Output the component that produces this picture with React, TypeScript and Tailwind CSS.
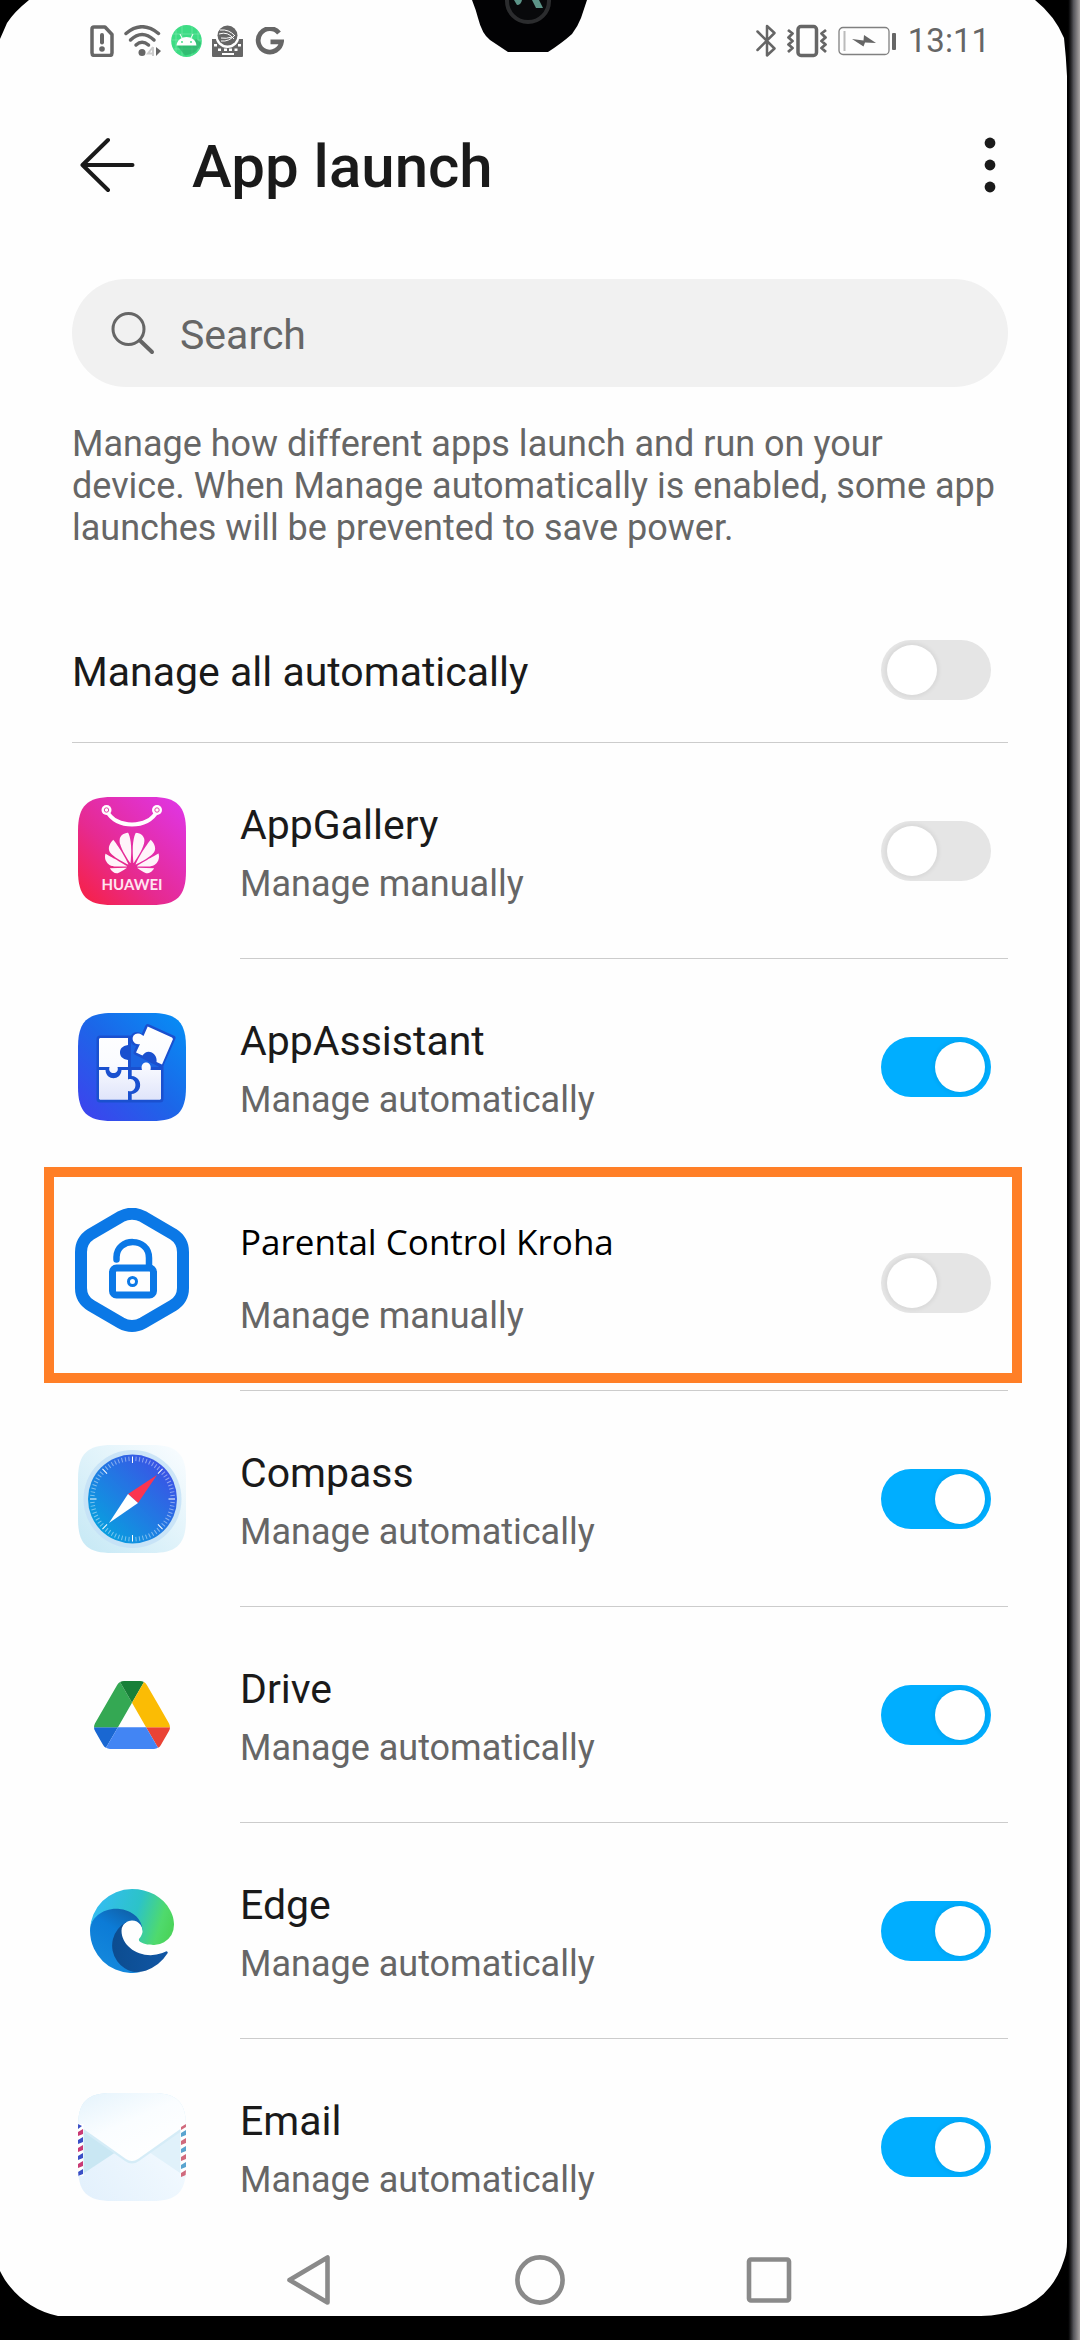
import React, { useState } from "react"
import { SiHuawei } from "react-icons/si"

type AppItem = {
    id: string
    name: string
    auto: boolean
    icon: React.ReactNode
    highlighted?: boolean
}

const SQUIRCLE = "M0 34C0 9 9 0 34 0H74C99 0 108 9 108 34V74C108 99 99 108 74 108H34C9 108 0 99 0 74Z"

const AppGalleryIcon = () => (
    <svg viewBox="0 0 108 108" className="size-[108px]" aria-hidden="true">
        <defs>
            <linearGradient id="gallery" x1="0" y1="1" x2="1" y2="0">
                <stop offset="0" stopColor="#f8203f" />
                <stop offset="0.4" stopColor="#e62a90" />
                <stop offset="1" stopColor="#df36ea" />
            </linearGradient>
        </defs>
        <path d={SQUIRCLE} fill="url(#gallery)" />
        <path d="M29 14C37 32 71 32 79 14" fill="none" stroke="#fff" strokeWidth="4" strokeLinecap="round" />
        <circle cx="28.5" cy="13" r="5" fill="#fff" />
        <circle cx="79" cy="13" r="5" fill="#fff" />
        <circle cx="28.5" cy="13" r="2.2" fill="none" stroke="#e04aa8" strokeWidth="1" />
        <circle cx="79" cy="13" r="2.2" fill="none" stroke="#e04aa8" strokeWidth="1" />
        <SiHuawei x="27" y="29" size={54} color="#fff4fa" />
        <text x="54" y="93" textAnchor="middle" fontSize="15" fontWeight="700" fill="#ffe3f0" className="font-[Lato,sans-serif]">HUAWEI</text>
    </svg>
)

const AssistantIcon = () => (
    <svg viewBox="0 0 108 108" className="size-[108px]" aria-hidden="true">
        <defs>
            <linearGradient id="assistant" x1="0" y1="1" x2="1" y2="0">
                <stop offset="0" stopColor="#4040ee" />
                <stop offset="0.5" stopColor="#1c66e8" />
                <stop offset="1" stopColor="#0590f6" />
            </linearGradient>
            <linearGradient id="piece" x1="0" y1="15" x2="0" y2="87" gradientUnits="userSpaceOnUse">
                <stop offset="0" stopColor="#ffffff" />
                <stop offset="0.5" stopColor="#fafbff" />
                <stop offset="1" stopColor="#dfe4fa" />
            </linearGradient>
        </defs>
        <path d={SQUIRCLE} fill="url(#assistant)" />
        <rect x="21" y="25" width="62" height="62" rx="1" fill="#1a50cf" stroke="#1a50cf" strokeWidth="5" strokeLinejoin="round" />
        <path d="M53 22H86V54H53Z" fill="#1b64e2" />
        <path d="M69.7 13.5L95 25L83 52L58 39.5Z" fill="#1a50cf" stroke="#1a50cf" strokeWidth="5" strokeLinejoin="round" />
        <circle cx="59" cy="26" r="7" fill="#1a50cf" />
        <g fill="url(#piece)">
            <path d="M22 25H50V32C44 33 42 36 42 39.5S44 46 50 47V54H39.5C42 62 29 62 31.5 54H21V26Z" />
            <path d="M21 57H27.5C28 68 43 68 43.5 57H50V66.5C60 63 60 81 50 78V86.7H22L21 85.7Z" />
            <path d="M53.7 57H64C61 47 75 47 72.5 57H83V85.7L82 86.7H53.7V81C65 80 65 64 53.7 63Z" />
            <path d="M69.7 13.5L94 24.5L95 26L84 51.5L78.5 49C80 40 69 34.5 64.5 42.5L58 39.5L62 31C54 33 51.5 21 60 20.5C63 20.5 64 22 65.5 23Z" />
        </g>
    </svg>
)

// the shield sits in the top part of a taller box
const KrohaIcon = () => (
    <svg viewBox="0 0 114 150" className="h-[150px] w-[114px]" fill="none" stroke="#0b78e6" aria-hidden="true">
        <path d="M46 8.5Q57 3 68 8.5L98 26Q108 32.5 108 44V80Q108 91.5 98 97.5L68 115Q57 121 46 115L16 97.5Q6 91.5 6 80V44Q6 32.5 16 26Z" strokeWidth="12" />
        <rect x="37.5" y="60" width="41" height="27" rx="4" strokeWidth="7" />
        <path d="M41.5 51.5V49C42 29 74 29 74 50V58" strokeWidth="6.5" strokeLinecap="round" />
        <circle cx="57.5" cy="73.5" r="4" strokeWidth="3" />
    </svg>
)

const CompassIcon = () => (
    <svg viewBox="0 0 108 108" className="size-[108px]" aria-hidden="true">
        <defs>
            <linearGradient id="compassBg" x1="0" y1="1" x2="1" y2="0">
                <stop offset="0" stopColor="#c5e8f5" />
                <stop offset="1" stopColor="#fafdff" />
            </linearGradient>
            <linearGradient id="dial" x1="0" y1="1" x2="1" y2="0">
                <stop offset="0.1" stopColor="#06a3df" />
                <stop offset="0.9" stopColor="#3d4fe6" />
            </linearGradient>
        </defs>
        <path d={SQUIRCLE} fill="url(#compassBg)" />
        <circle cx="54.5" cy="54" r="49" fill="#c3e0f6" fillOpacity="0.8" />
        <circle cx="54.5" cy="54" r="44.5" fill="url(#dial)" />
        {Array.from({ length: 72 }, (_, i) => (
            <line
                key={i}
                x1="54.5"
                x2="54.5"
                y1="11.5"
                y2={i % 9 === 0 ? 18 : 16}
                stroke="#fff"
                strokeWidth="1"
                strokeOpacity={i % 9 === 0 ? 1 : 0.45}
                transform={`rotate(${i * 5} 54.5 54)`}
            />
        ))}
        <path d="M79 30L50 49L60 58Z" fill="#fb3550" />
        <path d="M31 78L50 49L60 58Z" fill="#fff" />
    </svg>
)

const DriveIcon = () => (
    <svg viewBox="0 0 87.3 78" className="w-[76px]" aria-hidden="true">
        <path fill="#1967d2" d="m6.6 66.85 3.85 6.65c.8 1.4 1.95 2.5 3.3 3.3l13.75-23.8h-27.5c0 1.55.4 3.1 1.2 4.5z" />
        <path fill="#34a853" d="m43.65 25-13.75-23.8c-1.35.8-2.5 1.9-3.3 3.3l-25.4 44a9.06 9.06 0 0 0 -1.2 4.5h27.5z" />
        <path fill="#ea4335" d="m73.55 76.8c1.35-.8 2.5-1.9 3.3-3.3l1.6-2.75 7.65-13.25c.8-1.4 1.2-2.95 1.2-4.5h-27.5z" />
        <path fill="#188038" d="m43.65 25 13.75-23.8c-1.35-.8-2.9-1.2-4.5-1.2h-18.5c-1.6 0-3.15.45-4.5 1.2z" />
        <path fill="#4285f4" d="m59.8 53h-32.3l-13.75 23.8c1.35.8 2.9 1.2 4.5 1.2h50.8c1.6 0 3.15-.45 4.5-1.2z" />
        <path fill="#fbbc04" d="m73.4 26.5-12.7-22c-.8-1.4-1.95-2.5-3.3-3.3l-13.75 23.8 16.15 28h27.45c0-1.55-.4-3.1-1.2-4.5z" />
    </svg>
)

const EdgeIcon = () => (
    <svg viewBox="0 0 256 256" className="size-[84px]" aria-hidden="true">
        <defs>
            <linearGradient id="edgeDark" x1="63" y1="177" x2="241" y2="177" gradientUnits="userSpaceOnUse">
                <stop offset="0" stopColor="#0c4c8f" />
                <stop offset="1" stopColor="#1156a4" />
            </linearGradient>
            <linearGradient id="edgeBlue" x1="140" y1="80" x2="50" y2="230" gradientUnits="userSpaceOnUse">
                <stop offset="0" stopColor="#1062ab" />
                <stop offset="0.4" stopColor="#0c7bd6" />
                <stop offset="1" stopColor="#1387dc" />
            </linearGradient>
            <linearGradient id="edgeGreen" x1="30" y1="60" x2="250" y2="130" gradientUnits="userSpaceOnUse">
                <stop offset="0" stopColor="#33bdee" />
                <stop offset="0.5" stopColor="#2cc3c8" />
                <stop offset="0.85" stopColor="#4fda6d" />
                <stop offset="1" stopColor="#4bd45c" />
            </linearGradient>
        </defs>
        <g transform="translate(-4.63 -4.92)">
            <path fill="url(#edgeDark)" d="M235.68 195.46a93.73 93.73 0 0 1-10.54 4.71 101.87 101.87 0 0 1-35.9 6.46c-47.32 0-88.54-32.55-88.54-74.32A31.48 31.48 0 0 1 117.13 105c-42.8 1.8-53.8 46.4-53.8 72.53 0 73.88 68.09 81.37 82.76 81.37 7.91 0 19.84-2.3 27-4.56l1.31-.44a128.34 128.34 0 0 0 66.6-52.8 4 4 0 0 0-5.32-5.64Z" />
            <path fill="url(#edgeBlue)" d="M110.34 246.34A79.2 79.2 0 0 1 87.6 225a80.72 80.72 0 0 1 29.53-120c3.12-1.47 8.45-4.13 15.54-4a32.35 32.35 0 0 1 25.69 13 31.88 31.88 0 0 1 6.36 18.66c0-.21 24.46-79.6-80-79.6-43.9 0-80 41.66-80 78.21a130.15 130.15 0 0 0 12.11 56 128 128 0 0 0 156.38 67.11 75.55 75.55 0 0 1-62.78-8Z" />
            <path fill="url(#edgeGreen)" d="M156.94 153.78c-.81 1.05-3.3 2.5-3.3 5.66 0 2.61 1.7 5.12 4.72 7.23 14.38 10 41.49 8.68 41.56 8.68a59.56 59.56 0 0 0 30.27-8.35A61.38 61.38 0 0 0 260.63 114c.26-22.41-8-37.31-11.34-43.91C228.09 28.76 182.35 5 132.63 5a128 128 0 0 0-128 126.2c.48-36.54 36.8-66.05 80-66.05 3.5 0 23.46.34 42 10.07 16.34 8.58 24.9 18.94 30.85 29.21 6.18 10.67 7.28 24.15 7.28 29.52s-2.74 13.33-7.82 19.83Z" />
        </g>
    </svg>
)

const EmailIcon = () => (
    <svg viewBox="0 0 108 108" className="size-[108px]" aria-hidden="true">
        <defs>
            <linearGradient id="mailBody" x1="0" y1="1" x2="1" y2="0.3">
                <stop offset="0" stopColor="#e2f0fc" />
                <stop offset="1" stopColor="#f5fbff" />
            </linearGradient>
            <linearGradient id="mailFlap" x1="0" y1="0" x2="0.7" y2="1">
                <stop offset="0" stopColor="#e4f3fc" />
                <stop offset="0.5" stopColor="#fafdff" />
                <stop offset="1" stopColor="#ffffff" />
            </linearGradient>
            <clipPath id="mailClip">
                <path d={SQUIRCLE} />
            </clipPath>
        </defs>
        <g clipPath="url(#mailClip)">
            <rect width="108" height="108" fill="url(#mailBody)" />
            <path d="M0 32L38 59L0 84Z" fill="#c9e7f3" />
            <path d="M108 32L71 59L108 84Z" fill="#e0f1fa" />
            <path d="M0 35L47 68Q54 73 61 68L108 35V0H0Z" fill="#d5ecf7" />
            <path d="M0 0H108V32L60 66Q54 70 48 66L0 32Z" fill="url(#mailFlap)" />
            <path d="M0 31H5.5V83H0ZM102.5 31H108V83H102.5Z" fill="#fff" />
            <path d="M0 31L4 33L0 36Z" fill="#3a4fc6" />
            {[38, 46, 54, 62, 70, 78].map((y, i) => (
                <React.Fragment key={y}>
                    <path d={`M0 ${y + 1}L5 ${y - 2}V${y + 3}L0 ${y + 5}Z`} fill={i % 2 ? "#3a4fc6" : "#c93a74"} />
                    <path d={`M103 ${y + 2}L108 ${y - 1}V${y + 4}L103 ${y + 6}Z`} fill={i % 2 ? "#d06a7d" : "#5aa4cf"} />
                </React.Fragment>
            ))}
            <path d="M103 34L108 31V34L103 37Z" fill="#d06a7d" />
        </g>
    </svg>
)

const apps: AppItem[] = [
    { id: "gallery", name: "AppGallery", auto: false, icon: <AppGalleryIcon /> },
    { id: "assistant", name: "AppAssistant", auto: true, icon: <AssistantIcon /> },
    { id: "kroha", name: "Parental Control Kroha", auto: false, icon: <KrohaIcon />, highlighted: true },
    { id: "compass", name: "Compass", auto: true, icon: <CompassIcon /> },
    { id: "drive", name: "Drive", auto: true, icon: <DriveIcon /> },
    { id: "edge", name: "Edge", auto: true, icon: <EdgeIcon /> },
    { id: "email", name: "Email", auto: true, icon: <EmailIcon /> },
]

const StatusLeft = () => (
    <div className="flex items-center gap-[10px] text-[#666]">
        <svg viewBox="0 0 24 32" className="h-8 w-6" aria-hidden="true">
            <path d="M4 2H15L22 9.5V28Q22 30.5 19.5 30.5H4.5Q2 30.5 2 28V4Q2 2 4 2Z" fill="none" stroke="currentColor" strokeWidth="3.5" strokeLinejoin="round" />
            <path d="M12 10V17.5" stroke="currentColor" strokeWidth="4" strokeLinecap="round" />
            <circle cx="12" cy="24" r="2.8" fill="currentColor" />
        </svg>
        <svg viewBox="0 0 37 32" className="h-8 w-[37px]" aria-hidden="true">
            <g fill="none" stroke="currentColor" strokeWidth="3.5" strokeLinecap="round">
                <path d="M2 8.5Q18 -5 34.5 8.5" />
                <path d="M6.5 15Q18 4 30 15" />
                <path d="M12 20Q18 14.5 24.5 20" />
            </g>
            <circle cx="18" cy="27.5" r="3.5" fill="currentColor" />
            <path d="M29 22V31M29 22L24 28.5H30" fill="none" stroke="#ccc" strokeWidth="2" />
            <path d="M32 22L37 26L32 31Z" fill="currentColor" />
        </svg>
        <svg viewBox="0 0 31 32" className="h-8 w-[31px]" aria-hidden="true">
            <ellipse cx="15.5" cy="16" rx="15.3" ry="16" fill="#3ddc84" />
            <path d="M5 5V27M11 1V31M21 1V31M27 6V26M2 9H29M1 15H30M3 24H28" stroke="#7fe8ae" strokeWidth="0.6" />
            <path d="M6 20.5L14 30.5Q27 29 30 18L25.5 14Z" fill="#2aa866" fillOpacity="0.6" />
            <path d="M5.5 20.5C6.5 9 24.5 9 25.5 20.5Z" fill="#fff" />
            <path d="M9 9L11 13M22 9L20 13" stroke="#fff" strokeWidth="1" />
            <circle cx="11" cy="17" r="0.9" fill="#3ddc84" />
            <circle cx="20" cy="17" r="0.9" fill="#3ddc84" />
        </svg>
        <svg viewBox="0 0 31 32" className="h-8 w-[31px]" aria-hidden="true">
            <path d="M0 14H31V31Q31 32 30 32H1Q0 32 0 31Z" fill="currentColor" />
            <circle cx="15.5" cy="11" r="12" fill="#fff" />
            <circle cx="15.5" cy="10.5" r="10" fill="currentColor" />
            <path d="M8 5Q17 4 23 11M7 9Q16 6 22 14M9 16Q17 17 23 10M9 13Q14 14 20 12" fill="none" stroke="#fff" strokeWidth="1" />
            <path d="M2 19H5V21.5H2ZM26 19H29V21.5H26ZM6 23.5H9V26H6ZM12 23.5H15V26H12ZM17 23.5H20V26H17ZM22.5 23.5H25.5V26H22.5ZM10 28H22V30H10Z" fill="#fff" />
        </svg>
        <svg viewBox="-3 0 31 29" className="h-[29px] w-[31px]" aria-hidden="true">
            <path d="M23 6A11.7 11.7 0 1 0 25.5 14.8H14.5" fill="none" stroke="currentColor" strokeWidth="4.8" />
        </svg>
    </div>
)

const StatusRight = () => (
    <div className="flex items-center gap-[11px] text-[#666]">
        <svg viewBox="0 0 20 34" className="h-[34px] w-5" fill="none" stroke="currentColor" strokeWidth="2.5" strokeLinejoin="round" strokeLinecap="round" aria-hidden="true">
            <path d="M1.5 7.5L18.5 24.5L11 31.5V2L18.5 9L1.5 26" />
        </svg>
        <svg viewBox="0 0 40 34" className="h-[34px] w-10" fill="none" stroke="currentColor" strokeLinejoin="round" aria-hidden="true">
            <rect x="11" y="2.5" width="18.5" height="29" rx="3" strokeWidth="3.5" />
            <path d="M1 6L5.5 9.5L1.5 13.5L5.5 17L1.5 20.5L5.5 24L1 28M39 6L34.5 9.5L38.5 13.5L34.5 17L38.5 20.5L34.5 24L39 28" strokeWidth="2.8" />
        </svg>
        <svg viewBox="0 0 59 30" className="h-[30px] w-[59px]" aria-hidden="true">
            <rect x="1" y="1.5" width="50" height="27" rx="4" fill="none" stroke="#808080" strokeWidth="1.3" />
            <path d="M6.5 5V25" stroke="#bbb" strokeWidth="2" />
            <path d="M14 13L25.5 14.5L26 9L38 17L27 16.5L25.5 20.5Z" fill="currentColor" />
            <rect x="54" y="7" width="4" height="17" rx="1" fill="currentColor" />
        </svg>
        <time className="text-[33px] leading-10">13:11</time>
    </div>
)

const Toggle: React.FC<{ id: string; checked: boolean; onChange: () => void }> = ({ id, checked, onChange }) => (
    <input
        id={id}
        type="checkbox"
        role="switch"
        checked={checked}
        onChange={onChange}
        className="mr-[17px] h-[60px] w-[110px] shrink-0 cursor-pointer appearance-none rounded-full bg-[#e5e5e5] px-[6px] py-[5px] before:block before:size-[50px] before:rounded-full before:bg-white before:shadow-[0_0_4px_2px_rgba(0,0,0,0.06)] checked:bg-[#00aeff] checked:before:ml-auto"
    />
)

const Bezel = () => (
    <>
        <svg viewBox="0 0 30 40" className="absolute left-0 top-0 h-10 w-[30px]" aria-hidden="true">
            <path d="M0 0H29Q14 12 7 23Q4 30 0 39Z" fill="#000" />
        </svg>
        <svg viewBox="0 0 32 76" className="absolute right-0 top-0 h-[76px] w-8" aria-hidden="true">
            <path d="M0 0H32V76Q31 56 29 38Q20 16 0 0Z" fill="#000" />
        </svg>
        <svg viewBox="0 0 60 45" className="absolute bottom-0 left-0 h-[45px] w-[60px]" aria-hidden="true">
            <path d="M0 0Q2 4 5 9Q25 38 58 45H0Z" fill="#000" />
        </svg>
        <svg viewBox="0 0 86 74" className="absolute bottom-0 right-0 h-[74px] w-[86px]" aria-hidden="true">
            <path d="M86 0Q86 10 83 18Q66 72 0 74H86Z" fill="#000" />
        </svg>
    </>
)

// box is wider than the drawing, the camera sits a little left of the middle
const Notch = () => (
    <svg viewBox="0 0 124 52" className="absolute left-1/2 top-0 h-[52px] w-[124px] -translate-x-1/2" aria-hidden="true">
        <path d="M0 0Q4 10 6 18Q10 34 18 40L36 52H76Q90 43 100 34Q106 26 109 18L115 0Z" fill="#020204" />
        <circle cx="56" cy="1" r="21" fill="#08090b" stroke="#2b2c2e" strokeWidth="4" />
        <path d="M42 0L45 5Q49 5 50 0ZM60 0L64 8L71 8L67 0Z" fill="#5c9488" />
    </svg>
)

export default function App() {
    const [enabled, setEnabled] = useState<Record<string, boolean>>(
        Object.fromEntries(apps.map((app) => [app.id, app.auto]))
    )
    const [all, setAll] = useState(false)

    return (
        <div className="flex min-h-screen bg-black pb-6 font-[Roboto,sans-serif]">
            <div className="relative flex min-w-0 flex-1 flex-col bg-[#fefefe] pb-[11px] pl-[72px] pr-[59px]">
                <Bezel />
                <Notch />

                <div className="flex h-[82px] items-center justify-between px-[18px]">
                    <StatusLeft />
                    <StatusRight />
                </div>

                <header className="flex h-[166px] items-center gap-14 pl-2 text-[#1a1a1a]">
                    <button type="button" aria-label="Back">
                        <svg viewBox="0 0 56 56" className="size-14" fill="none" stroke="currentColor" strokeWidth="4" strokeLinecap="round" strokeLinejoin="round" aria-hidden="true">
                            <path d="M28 3L2.5 28L28 53M2.5 28H52.5" />
                        </svg>
                    </button>
                    <h1 className="flex-1 pt-1 text-[60px] font-medium leading-[72px]">App launch</h1>
                    <button type="button" aria-label="More options" className="pr-3">
                        <svg viewBox="0 0 12 56" className="h-14 w-3" fill="currentColor" aria-hidden="true">
                            <circle cx="6" cy="6" r="5.4" />
                            <circle cx="6" cy="28" r="5.4" />
                            <circle cx="6" cy="50" r="5.4" />
                        </svg>
                    </button>
                </header>

                <label className="mt-[31px] flex h-[108px] items-center gap-6 rounded-full bg-[#f1f1f1] pl-[38px] pr-10">
                    <svg viewBox="0 0 46 46" className="size-[46px] shrink-0" fill="none" stroke="#666" strokeWidth="3" strokeLinecap="round" aria-hidden="true">
                        <circle cx="18.5" cy="19" r="15.5" />
                        <path d="M30 30.5L42 42" strokeWidth="4" />
                    </svg>
                    <input type="text" aria-label="Search" placeholder="Search" className="min-w-0 flex-1 bg-transparent pt-1 text-[41px] leading-[48px] text-[#1a1a1a] outline-none placeholder:text-[#666]" />
                </label>

                <p className="mt-9 pr-3 text-[36px] leading-[42px] text-[#666]">
                    Manage how different apps launch and run on your device. When Manage automatically is enabled, some app launches will be prevented to save power.
                </p>

                <div className="mt-[49px] flex min-h-[145px] items-center justify-between border-b border-[#ccc]">
                    <label htmlFor="all" className="pt-1 text-[41px] leading-[48px] text-[#1a1a1a]">Manage all automatically</label>
                    <Toggle id="all" checked={all} onChange={() => setAll(!all)} />
                </div>

                <ul>
                    {
                        apps.map((app) => (
                            <li key={app.id} className="group relative flex min-h-54">
                                {app.highlighted && (
                                    <div className="pointer-events-none absolute -left-7 -right-[14px] -top-2 bottom-2 z-10 border-[10px] border-[#ff7f27]" />
                                )}
                                <div className="flex w-[168px] items-center">
                                    <div className="flex w-30 justify-center">
                                        {app.icon}
                                    </div>
                                </div>
                                <div className="flex min-w-0 flex-1 items-center justify-between border-b border-[#ccc] group-last:border-transparent">
                                    <div className={app.highlighted ? "flex flex-col gap-7 self-end pb-[52px]" : "flex flex-col gap-[13px] self-end pb-[52px]"}>
                                        <label
                                            htmlFor={app.id}
                                            className={app.highlighted ? "font-['Open_Sans',sans-serif] text-[35px] leading-[48px] text-black" : "text-[41px] leading-[48px] text-[#1a1a1a]"}
                                        >
                                            {app.name}
                                        </label>
                                        <span className="text-[36px] leading-[44px] text-[#666]">
                                            {app.auto ? "Manage automatically" : "Manage manually"}
                                        </span>
                                    </div>
                                    <Toggle
                                        id={app.id}
                                        checked={enabled[app.id]}
                                        onChange={() => setEnabled({ ...enabled, [app.id]: !enabled[app.id] })}
                                    />
                                </div>
                            </li>
                        ))
                    }
                </ul>

                <nav className="flex items-center justify-center gap-[180px] text-[#8a8a8a]">
                    <button type="button" aria-label="Back">
                        <svg viewBox="0 0 50 50" className="size-[50px]" fill="none" stroke="currentColor" strokeWidth="4.6" strokeLinejoin="round" aria-hidden="true">
                            <path d="M4.5 25L42.5 2.5V47.5Z" />
                        </svg>
                    </button>
                    <button type="button" aria-label="Home">
                        <svg viewBox="0 0 50 50" className="size-[50px]" fill="none" stroke="currentColor" strokeWidth="4.6" aria-hidden="true">
                            <circle cx="25" cy="25" r="22.6" />
                        </svg>
                    </button>
                    <button type="button" aria-label="Recent apps">
                        <svg viewBox="0 0 50 50" className="size-[50px]" fill="none" stroke="currentColor" strokeWidth="4.6" aria-hidden="true">
                            <rect x="4" y="4.5" width="40" height="41" rx="2" />
                        </svg>
                    </button>
                </nav>
            </div>
            <div className="-mb-6 w-[13px] bg-linear-to-r from-black via-[#55555a] to-[#aaa6a6]" />
        </div>
    )
}
